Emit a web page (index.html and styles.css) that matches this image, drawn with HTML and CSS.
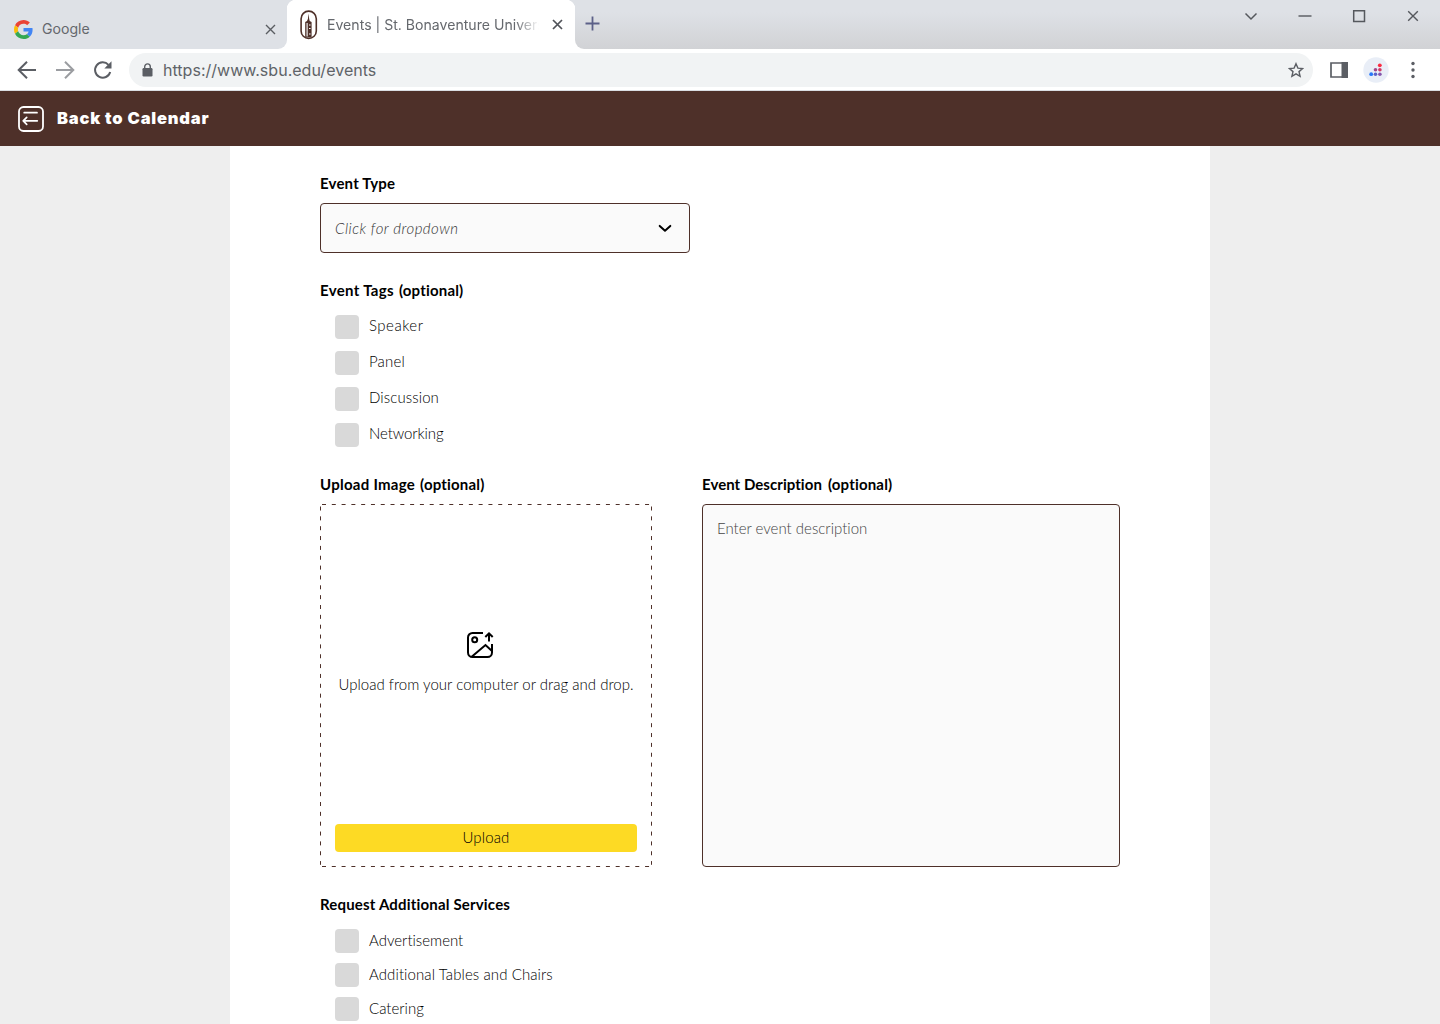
FILE: index.html
```html
<!DOCTYPE html>
<html lang="en">
<head>
<meta charset="utf-8">
<title>Events | St. Bonaventure University</title>
<link rel="stylesheet" href="styles.css">
</head>
<body>
<header class="browser">
  <div class="tabstrip">
    <div class="tab tab-idle">
      <svg class="google" width="19" height="19" viewBox="0 0 48 48"><path fill="#EA4335" d="M24 9.5c3.54 0 6.71 1.22 9.21 3.6l6.85-6.85C35.9 2.38 30.47 0 24 0 14.62 0 6.51 5.38 2.56 13.22l7.98 6.19C12.43 13.72 17.74 9.5 24 9.5z"/><path fill="#4285F4" d="M46.98 24.55c0-1.57-.15-3.09-.38-4.55H24v9.02h12.94c-.58 2.96-2.26 5.48-4.78 7.18l7.73 6c4.51-4.18 7.09-10.36 7.09-17.65z"/><path fill="#FBBC05" d="M10.53 28.59c-.48-1.45-.76-2.99-.76-4.59s.27-3.14.76-4.59l-7.98-6.19C.92 16.46 0 20.12 0 24c0 3.88.92 7.54 2.56 10.78l7.97-6.19z"/><path fill="#34A853" d="M24 48c6.48 0 11.93-2.13 15.89-5.81l-7.73-6c-2.15 1.45-4.92 2.3-8.16 2.3-6.26 0-11.57-4.22-13.47-9.91l-7.98 6.19C6.51 42.62 14.62 48 24 48z"/></svg>
      <span class="tab-title">Google</span>
      <svg class="tab-close" width="11" height="11" viewBox="0 0 11 11"><path d="M1 1l9 9M10 1l-9 9" stroke="#5a5d62" stroke-width="1.4"/></svg>
    </div>
    <div class="tab tab-active">
      <svg class="crest" width="18" height="30" viewBox="0 0 18 30"><rect x="1.1" y="1.1" width="15.2" height="27.4" rx="7.6" fill="#fff" stroke="#4e3029" stroke-width="1.6"/><path d="M8.600 3.500L9.200 9l.5 2 1.900 1v15.500H5.200V12l1.800-1 .9-2z" fill="#4e3029"/><path d="M7.100 13v13.500M9 15h1.600M9 18.500h1.600M9 24h1.600" stroke="#fff" stroke-width="1.100"/></svg>
      <span class="tab-title">Events | St. Bonaventure Univers</span>
      <svg class="tab-close" width="11" height="11" viewBox="0 0 11 11"><path d="M1 1l9 9M10 1l-9 9" stroke="#505359" stroke-width="1.7"/></svg>
    </div>
    <div class="strip-rest">
      <svg class="new-tab" width="15" height="15" viewBox="0 0 15 15"><path d="M7.500 .5v14M.5 7.500h14" stroke="#5c6088" stroke-width="1.800"/></svg>
      <div class="window-controls">
        <svg width="14" height="14" viewBox="0 0 14 14"><path d="M1.500 4.500l5.500 5.500 5.500-5.500" fill="none" stroke="#55585d" stroke-width="1.500"/></svg>
        <svg width="14" height="14" viewBox="0 0 14 14"><path d="M.5 7h13" stroke="#55585d" stroke-width="1.400"/></svg>
        <svg width="14" height="14" viewBox="0 0 14 14"><path d="M1.700 1.700h10.800v10.800H1.700z" fill="none" stroke="#55585d" stroke-width="1.500"/></svg>
        <svg width="14" height="14" viewBox="0 0 14 14"><path d="M2.200 2.200l9.600 9.600M11.800 2.200l-9.600 9.600" stroke="#55585d" stroke-width="1.400"/></svg>
      </div>
    </div>
  </div>
  <div class="toolbar">
    <svg class="nav" width="20" height="20" viewBox="0 0 20 20"><path d="M19 10H2.500M10 1.700L1.700 10l8.300 8.300" fill="none" stroke="#5b5e64" stroke-width="2"/></svg>
    <svg class="nav" width="20" height="20" viewBox="0 0 20 20"><path d="M1 10h16.500M10 1.700l8.300 8.300-8.300 8.300" fill="none" stroke="#9b9da1" stroke-width="2"/></svg>
    <svg class="nav" width="20" height="20" viewBox="0 0 20 20"><path d="M15.500 4.800A7.700 7.700 0 1 0 17.200 12" fill="none" stroke="#5b5e64" stroke-width="2"/><path d="M18.500 1.300v7.200h-7.200z" fill="#5b5e64"/></svg>
    <div class="omnibox">
      <svg width="11" height="14" viewBox="0 0 11 14"><path d="M2.700 5.500V3.700a2.800 2.800 0 0 1 5.600 0v1.800" fill="none" stroke="#5b5e64" stroke-width="1.400"/><rect x=".5" y="5" width="10" height="8.500" rx="1.200" fill="#5b5e64"/></svg>
      <span class="url">https://www.sbu.edu/events</span>
      <svg class="star" width="16" height="16" viewBox="0 0 16 16"><path d="M8 1.700l1.900 4.400 4.700.4-3.600 3.100 1.100 4.700L8 11.800l-4.100 2.500L5 9.600 1.400 6.500l4.700-.4z" fill="none" stroke="#5b5e64" stroke-width="1.400" stroke-linejoin="miter"/></svg>
    </div>
    <svg class="panel" width="18" height="16" viewBox="0 0 18 16"><path d="M1 1h16v14H1z" fill="#fff" stroke="#5b5e64" stroke-width="1.700"/><path d="M11.500 0H18v16h-6.500z" fill="#5b5e64"/></svg>
    <svg class="ext" width="26" height="26" viewBox="0 0 26 26"><circle cx="13" cy="13" r="12.700" fill="#e9eef7"/><circle cx="16.800" cy="8.300" r="1.900" fill="#fb2c42"/><circle cx="12.500" cy="12.800" r="1.800" fill="#a1478a"/><circle cx="16.900" cy="12.800" r="1.800" fill="#cf3a65"/><circle cx="8.200" cy="17.200" r="1.900" fill="#2878fa"/><circle cx="12.500" cy="17.200" r="1.800" fill="#5a62c8"/><circle cx="16.900" cy="17.200" r="1.800" fill="#8656ad"/></svg>
    <svg class="dots" width="4" height="18" viewBox="0 0 4 18"><g fill="#5b5e64"><circle cx="2" cy="2.500" r="1.700"/><circle cx="2" cy="9" r="1.700"/><circle cx="2" cy="15.500" r="1.700"/></g></svg>
  </div>
</header>

<nav class="appbar">
  <svg width="26" height="26" viewBox="0 0 26 26" fill="none" stroke="#fff" stroke-linecap="round" stroke-linejoin="round"><rect x="1" y="1" width="24" height="24" rx="4.500" stroke-width="1.800"/><path d="M6.200 6.700H19M19.300 14.800H5.500M8.700 11.300l-3.500 3.500 3.500 3.500" stroke-width="1.700"/></svg>
  <span class="back">Back to Calendar</span>
</nav>

<main class="sheet">
  <section>
    <h2><span>Event Type</span></h2>
    <div class="select"><span class="placeholder">Click for dropdown</span>
      <svg width="14" height="9" viewBox="0 0 14 9"><path d="M1.700 1.900L7 6.700l5.300-4.800" fill="none" stroke="#000" stroke-width="2" stroke-linecap="round" stroke-linejoin="round"/></svg>
    </div>
  </section>

  <section class="tags">
    <h2><span class="tags-label">Event Tags</span><span>(optional)</span></h2>
    <ul class="checks">
      <li><i class="box"></i><span class="speaker">Speaker</span></li>
      <li><i class="box"></i><span class="panel-tag">Panel</span></li>
      <li><i class="box"></i><span class="discussion">Discussion</span></li>
      <li><i class="box"></i><span class="networking">Networking</span></li>
    </ul>
  </section>

  <div class="columns">
    <section>
      <h2><span class="image-label">Upload Image</span><span>(optional)</span></h2>
      <div class="dropzone">
        <svg class="dash" width="332" height="363" viewBox="0 0 332 363" fill="none" stroke="#4e3029"><path d="M2 .5H329.500M2 362.500H329.500" stroke-dasharray="4 5.790"/><path d="M.5 2.500V360.800M331.500 2.500V360.800" stroke-dasharray="4 5.850"/></svg>
        <svg class="picture" width="28" height="28" viewBox="0 0 28 28" fill="none" stroke="#000" stroke-width="2"><path d="M17 2H6.500A4.500 4.500 0 0 0 2 6.500v15A4.500 4.500 0 0 0 6.500 26h15a4.500 4.500 0 0 0 4.500-4.500V13"/><circle cx="8.700" cy="8.700" r="2.500"/><path d="M6 25.500L19.500 14l6.500 6"/><path d="M23 10.500V2.800M19.300 6L23 2.300 26.700 6"/></svg>
        <p>Upload from your computer or drag and drop.</p>
        <button><span>Upload</span></button>
      </div>
    </section>
    <section>
      <h2 class="description"><span>Event Description</span><span class="optional">(optional)</span></h2>
      <div class="textarea">Enter event description</div>
    </section>
  </div>

  <section class="services">
    <h2><span>Request Additional Services</span></h2>
    <ul class="checks tight">
      <li><i class="box"></i><span>Advertisement</span></li>
      <li><i class="box"></i><span class="tables">Additional Tables and Chairs</span></li>
      <li><i class="box"></i><span>Catering</span></li>
    </ul>
  </section>
</main>
</body>
</html>
```
FILE: styles.css
```css
* { box-sizing: border-box; margin: 0; padding: 0; }
body {
  width: 1440px;
  height: 1024px;
  overflow: hidden;
  background: #eee;
  color: #000;
  font-family: Lato, sans-serif;
  font-size: 15px;
  font-variant-ligatures: none;
}
svg { display: block; flex: none; }
span { white-space: nowrap; }

/* Browser chrome */
.browser { height: 91px; background: #fff; border-bottom: 1px solid #dadde2; font-family: Inter, sans-serif; }
.tabstrip { display: flex; height: 49px; background: #fff; }
.tab { display: flex; align-items: center; }
.tab-idle { width: 287px; padding: 9px 11px 0 14px; background: #dee1e6; border-bottom-right-radius: 9px; }
.tab-idle .tab-title { margin-left: 9px; }
.tab-title { flex: 1; font-size: 14.1px; line-height: 20px; color: #65686d; }
.tab-active { width: 288px; padding: 0 12px 0 13px; background: #fff; border-radius: 9px 9px 0 0; box-shadow: 0 -9px 0 9px #dee1e6; clip-path: inset(0 0 9px 0); }
.tab-active { box-shadow: none; clip-path: none; background: radial-gradient(circle at 9px 9px, #fff 9px, #dee1e6 9.500px) 0 0 / 9px 9px no-repeat, radial-gradient(circle at 0 9px, #fff 9px, #dee1e6 9.500px) 100% 0 / 9px 9px no-repeat, #fff; border-radius: 0; }
.tab-active .tab-title {
  flex: none;
  width: 214px;
  margin: 0 11px 0 9px;
  overflow: hidden;
  -webkit-mask-image: linear-gradient(90deg, #000 88%, transparent 99%);
  mask-image: linear-gradient(90deg, #000 88%, transparent 99%);
}
.strip-rest {
  flex: 1;
  display: flex;
  border-bottom-left-radius: 9px;
  background: linear-gradient(180deg, #dee1e6 25%, #d1d2d5 100%);
}
.new-tab { margin: 16px 0 0 10px; }
.window-controls { display: flex; gap: 40px; margin: 9px 20px 0 auto; }

.toolbar { display: flex; align-items: center; height: 41px; padding: 0 25px 0 17px; }
.nav { margin-right: 18px; }
.omnibox { display: flex; align-items: center; width: 1184px; height: 34px; margin-left: -2px; padding: 0 9px 0 13px; border-radius: 17px; background: #f1f3f4; }
.url { flex: 1; margin-left: 10px; font-size: 16px; letter-spacing: .02px; color: #5f6368; }
.panel { margin-left: 17px; }
.ext { margin-left: 15px; }
.dots { margin-left: 22px; }

/* Calendar bar */
.appbar { display: flex; align-items: center; gap: 13px; height: 55px; padding-left: 18px; background: #4e3029; color: #fff; }
.back { margin-top: -2px; font: 900 16.5px/20px Inter, sans-serif; letter-spacing: .8px; }

/* Form */
.sheet { width: 980px; height: 878px; margin: 0 auto; padding: 27px 90px 0; background: #fff; overflow: hidden; }
h2 { display: flex; gap: 5px; height: 20px; font-size: 15px; line-height: 20px; font-weight: 700; letter-spacing: .18px; }
.tags-label { letter-spacing: .33px; }
.image-label { letter-spacing: .27px; }
.description { gap: 6px; letter-spacing: .05px; }
.optional { letter-spacing: .18px; }
.select { display: flex; align-items: center; justify-content: space-between; width: 370px; height: 50px; margin-top: 10px; padding: 0 17px 0 14px; border: 1px solid #4e3029; border-radius: 4px; background: #fafafa; }
.placeholder { margin-top: -1px; font-style: italic; font-weight: 300; letter-spacing: .48px; color: #333; }
.tags { margin-top: 27px; }
.checks { display: flex; flex-direction: column; gap: 12px; margin: 15px 0 0 15px; list-style: none; font-weight: 300; }
.checks li { display: flex; align-items: center; gap: 10px; height: 24px; line-height: 20px; }
.box { width: 24px; height: 24px; border-radius: 4px; background: #d9d9d9; }
.checks span { margin-top: -4px; }
.speaker { letter-spacing: .5px; }
.panel-tag { letter-spacing: .2px; }
.discussion { letter-spacing: .1px; }
.networking { letter-spacing: -.1px; }
.tables { letter-spacing: .09px; }
.tight { gap: 10px; }
.checks.tight span { margin-top: -2px; }
.columns { display: flex; gap: 50px; margin-top: 27px; }
.dropzone { position: relative; display: flex; flex-direction: column; align-items: center; width: 332px; height: 363px; margin-top: 10px; padding: 127px 15px 15px; font-weight: 300; }
.dash { position: absolute; left: 0; top: 0; }
.picture { margin-left: -12px; }
.dropzone p { margin-top: 15px; line-height: 20px; letter-spacing: .02px; white-space: nowrap; }
button { width: 302px; height: 28px; margin-top: auto; padding-bottom: 2px; border: 0; border-radius: 4px; background: #fdda24; font: inherit; line-height: 26px; letter-spacing: .15px; }
.textarea { width: 418px; height: 363px; margin-top: 10px; padding: 13px 14px; border: 1px solid #4e3029; border-radius: 4px; background: #fafafa; color: #444; font-weight: 300; line-height: 20px; }
.services { margin-top: 27px; }
```
